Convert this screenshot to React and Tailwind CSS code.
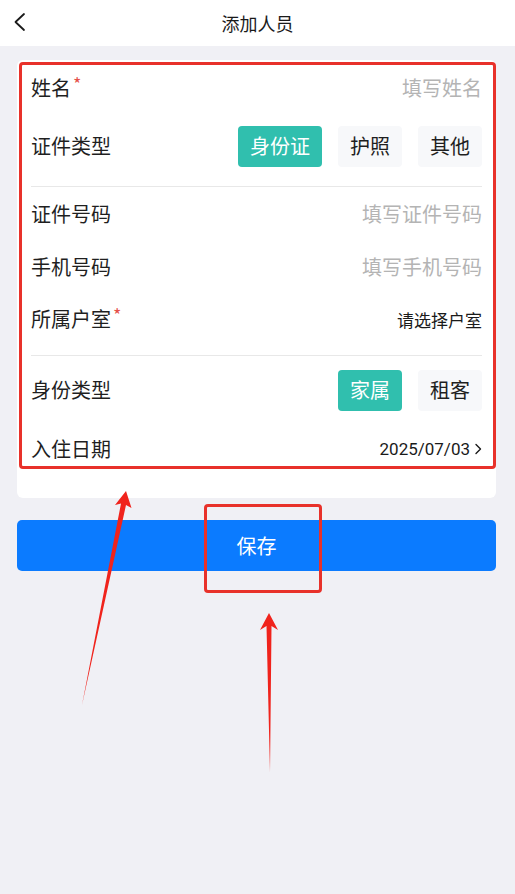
import React from "react";

const font = { fontFamily: '"Noto Sans CJK SC", "Noto Sans", sans-serif' };

const Star = () => (
  <span className="text-[#e5504a] text-[18px] leading-none relative top-[-5px] ml-[2px]">*</span>
);

const Row = ({ label, required, h, children }) => (
  <div className={`flex items-center justify-between ${h}`}>
    <div className="text-[20px] text-[#1f1f1f] leading-none flex items-center">
      {label}
      {required && <Star />}
    </div>
    <div className="flex items-center">{children}</div>
  </div>
);

const Chip = ({ active, children }) => (
  <div
    className={`h-[41px] px-[12px] rounded-[4px] flex items-center text-[20px] leading-none ${
      active ? "bg-[#30bfae] text-white" : "bg-[#f7f8fa] text-[#1f1f1f]"
    }`}
  >
    {children}
  </div>
);

const Placeholder = ({ children }) => (
  <span className="text-[20px] leading-none text-[#b4b4b4]">{children}</span>
);

export default function App() {
  return (
    <div className="relative min-h-[894px] bg-[#f0f0f5] overflow-hidden" style={font}>
      {/* header */}
      <div className="relative h-[46px] bg-white flex items-center justify-center">
        <svg className="absolute left-[12px] top-[12px]" width="16" height="20" viewBox="0 0 16 20">
          <path d="M12 2 L3.5 10 L12 18" fill="none" stroke="#1a1a1a" strokeWidth="1.8" strokeLinecap="round" strokeLinejoin="round" />
        </svg>
        <span className="text-[18px] text-[#1a1a1a]">添加人员</span>
      </div>

      {/* form card */}
      <div className="ml-[17px] mr-[19px] mt-[14px] bg-white rounded-[6px] px-[14px] pt-[4px] pb-[24px]">
        <Row label="姓名" required h="h-[48px]">
          <Placeholder>填写姓名</Placeholder>
        </Row>
        <Row label="证件类型" h="h-[68px]">
          <div className="flex gap-[16px]">
            <Chip active>身份证</Chip>
            <Chip>护照</Chip>
            <Chip>其他</Chip>
          </div>
        </Row>
        <div className="mt-[6px] h-px bg-[#e8e8e8]" />
        <Row label="证件号码" h="h-[54px]">
          <Placeholder>填写证件号码</Placeholder>
        </Row>
        <Row label="手机号码" h="h-[52px]">
          <Placeholder>填写手机号码</Placeholder>
        </Row>
        <Row label="所属户室" required h="h-[52px]">
          <span className="text-[17px] leading-none text-[#1a1a1a]">请选择户室</span>
        </Row>
        <div className="mt-[10px] h-px bg-[#e8e8e8]" />
        <Row label="身份类型" h="h-[68px]">
          <div className="flex gap-[16px]">
            <Chip active>家属</Chip>
            <Chip>租客</Chip>
          </div>
        </Row>
        <Row label="入住日期" h="h-[50px]">
          <span className="text-[17px] leading-none text-[#1a1a1a]" style={{ fontFamily: "Roboto, sans-serif" }}>
            2025/07/03
          </span>
          <svg className="ml-[4px]" width="8" height="12" viewBox="0 0 8 12">
            <path d="M2 1.5 L6.5 6 L2 10.5" fill="none" stroke="#1a1a1a" strokeWidth="1.4" strokeLinecap="round" strokeLinejoin="round" />
          </svg>
        </Row>
      </div>

      {/* save */}
      <div className="ml-[17px] mr-[19px] mt-[22px]">
        <button className="w-full h-[51px] rounded-[5px] bg-[#0b7bff] text-white text-[20px]">保存</button>
      </div>

      {/* annotation overlays */}
      <div className="absolute left-[19px] top-[62px] w-[477px] h-[407px] border-[3px] border-[#e8312a] rounded-[4px] pointer-events-none" />
      <div className="absolute left-[204px] top-[504px] w-[118px] h-[89px] border-[3.5px] border-[#e8312a] rounded-[4px] pointer-events-none" />
      <svg className="absolute left-0 top-0 pointer-events-none" width="515" height="894" viewBox="0 0 515 894">
        <polygon points="126,491 131.5,508 126,505 82,705 121,503.5 115,505" fill="#f0231c" />
        <polygon points="269,613 278,630 271.5,626 270,772 266.5,626 260,630" fill="#f0231c" />
      </svg>
    </div>
  );
}
